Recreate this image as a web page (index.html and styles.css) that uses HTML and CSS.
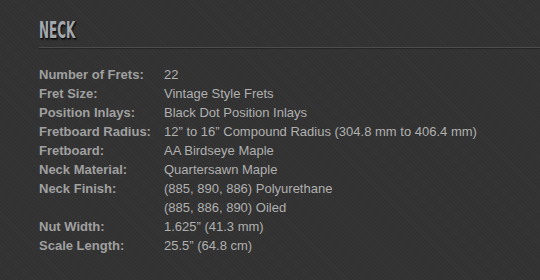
FILE: index.html
```html
<!DOCTYPE html>
<html>
<head>
<meta charset="utf-8">
<link rel="stylesheet" href="styles.css">
</head>
<body>
<section class="specs">
  <h2 class="title"><span class="title-text">NECK</span></h2>
  <dl class="list">
    <dt>Number of Frets:</dt><dd>22</dd>
    <dt>Fret Size:</dt><dd>Vintage Style Frets</dd>
    <dt>Position Inlays:</dt><dd>Black Dot Position Inlays</dd>
    <dt>Fretboard Radius:</dt><dd>12” to 16” Compound Radius (304.8 mm to 406.4 mm)</dd>
    <dt>Fretboard:</dt><dd>AA Birdseye Maple</dd>
    <dt>Neck Material:</dt><dd>Quartersawn Maple</dd>
    <dt>Neck Finish:</dt><dd>(885, 890, 886) Polyurethane<br>(885, 886, 890) Oiled</dd>
    <dt>Nut Width:</dt><dd>1.625” (41.3 mm)</dd>
    <dt>Scale Length:</dt><dd>25.5” (64.8 cm)</dd>
  </dl>
</section>
</body>
</html>
```
FILE: styles.css
```css
html, body {
  margin: 0;
  padding: 0;
}
body {
  width: 540px;
  height: 280px;
  overflow: hidden;
  background-color: #323232;
  background-image: repeating-linear-gradient(45deg, rgba(255,255,255,0.015) 0 1px, transparent 1px 3px);
  font-family: "Liberation Sans", Arial, sans-serif;
}
.specs {
  padding: 17px 0 0 39px;
}
.title {
  margin: 0;
  height: 30px;
  border-bottom: 1px solid #4c4c4c;
  box-shadow: 0 1px 0 #262626;
  font-family: "Liberation Sans Narrow", "DejaVu Sans Condensed", sans-serif;
  font-weight: bold;
  font-size: 23px;
  line-height: 26px;
}
.title-text {
  display: inline-block;
  color: #a2a8ae;
  transform: scaleX(0.58);
  transform-origin: left center;
  text-shadow: 1px 1px 1px #0e0e0e, 2px 2px 2px rgba(0,0,0,0.5);
}
.list {
  margin: 17px 0 0 0;
  display: grid;
  grid-template-columns: 125px 1fr;
  font-size: 13px;
  line-height: 19px;
}
.list dt {
  font-weight: bold;
  color: #a0a0a0;
}
.list dd {
  margin: 0;
  color: #b0b0b0;
}
```
